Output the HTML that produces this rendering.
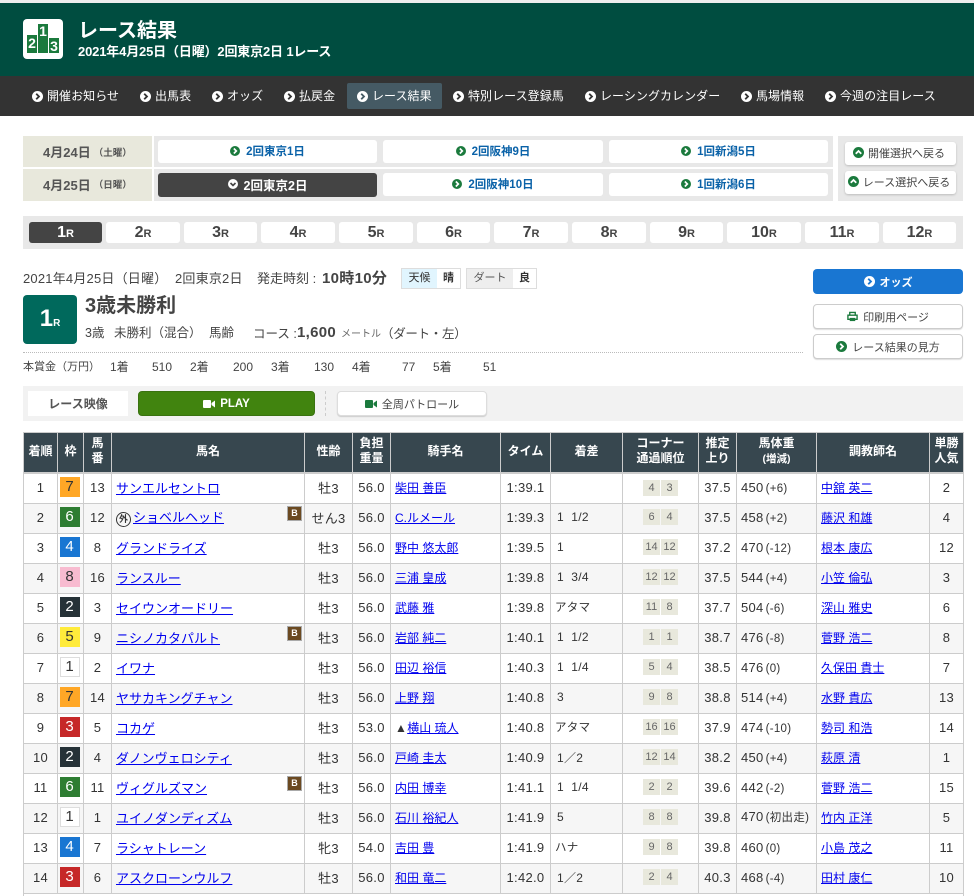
<!DOCTYPE html>
<html lang="ja"><head><meta charset="utf-8"><title>レース結果</title>
<style>
*{box-sizing:border-box}
html,body{margin:0;padding:0;width:974px;height:896px;overflow:hidden;background:#fff}
body{font-family:"Liberation Sans","Noto Sans CJK JP",sans-serif;color:#333;font-size:13px;position:relative}
.a{position:absolute;white-space:nowrap}
.c{display:flex;align-items:center;justify-content:center}
svg{display:block;flex:none}
i{font-style:normal}
.i{width:11px;height:11px;margin-right:5px}
.i2{width:10px;height:10px;margin-right:6px}
.nav{top:76px;height:40px;line-height:38px;font-size:12px;color:#fff;display:flex;align-items:center;letter-spacing:.05px}
.nav svg{margin-right:4px}
.db{background:#fff;border-radius:3px;height:23px;color:#0a62a8;font-weight:bold;font-size:11.5px;padding-bottom:2px}
.back{background:#fff;border-radius:3px;box-shadow:0 1px 2px #bbb;color:#444;font-size:11px;padding-bottom:2px}
.rb{top:222px;height:21px;background:#fff;border-radius:3px;font-size:16px;font-weight:bold;color:#444;text-align:center;line-height:21px}
.rb small{font-size:11px}
.btn{left:813px;width:150px;height:25px;background:#fff;border:1px solid #ccc;border-radius:4px;box-shadow:0 1px 1px #ddd;font-size:11px;color:#444}
.p{top:360px;font-size:12px;color:#444;line-height:15px}
.x{color:#444;line-height:16px}
table{position:absolute;left:23px;top:431.5px;width:940px;border-collapse:collapse;table-layout:fixed}
th{background:#37474f;color:#fff;font-size:12px;line-height:15px;font-weight:bold;border:1px solid #ccc;padding:0 0 2px;height:41px;text-align:center}
thead tr{border-bottom:2px solid #ccc}
td{border:1px solid #ccc;padding:0 0 2px;height:30px;text-align:center;font-size:13px;letter-spacing:.3px;color:#333;position:relative}
tbody tr:nth-child(even) td{background:#f6f6f6}
a{color:#00e;text-decoration:underline;letter-spacing:0}
td.n{text-align:left;padding-left:4px;font-size:13px}
td.j,td.t{text-align:left;padding-left:4px;font-size:12px}
td.m{text-align:left;padding-left:6px;font-size:12px}
td.m.k{padding-left:4px;font-size:11.5px}
td.w{text-align:left;padding-left:4px}
td.w span{font-size:11.5px;margin-left:2px}
.wk{display:block;position:relative;left:-1px;width:20px;height:20px;margin:0 auto;line-height:20px;font-size:15px;letter-spacing:0}
.w1{background:#fff;border:1px solid #ddd;line-height:18px;color:#333}.w2{background:#263238;color:#fff}.w3{background:#c62828;color:#fff}.w4{background:#1976d2;color:#fff}.w5{background:#ffeb3b}.w6{background:#2e7d32;color:#fff}.w7{background:#ffa726}.w8{background:#f8bbd0}
.b{position:absolute;right:2px;top:2px;width:15px;height:15px;background:#6b4a22;border:1px solid #aaa;color:#fff;font-size:9px;font-weight:bold;line-height:13px;text-align:center;letter-spacing:0}
.cn{display:inline-block;width:17px;height:16px;line-height:16px;background:#e8e8dc;font-size:11px;color:#666;letter-spacing:0;vertical-align:middle;margin:0 .5px}
.g{display:inline-block;width:15px;height:15px;border:1px solid #333;border-radius:50%;font-size:9px;line-height:13px;text-align:center;color:#333;margin-right:2px;vertical-align:0;font-weight:bold;letter-spacing:0}
</style></head><body>
<svg width="0" height="0" style="position:absolute"><defs>
<symbol id="r" viewBox="0 0 12 12"><circle cx="6" cy="6" r="6" fill="currentColor"/><path d="M4.6 3 7.6 6 4.6 9" fill="none" stroke="var(--k,#fff)" stroke-width="2"/></symbol>
<symbol id="d" viewBox="0 0 12 12"><circle cx="6" cy="6" r="6" fill="#fff"/><path d="M3 4.8 6 7.8 9 4.8" fill="none" stroke="#444" stroke-width="2"/></symbol>
<symbol id="u" viewBox="0 0 12 12"><circle cx="6" cy="6" r="6" fill="#1b7a3d"/><path d="M3 7.4 6 4.4 9 7.4" fill="none" stroke="#fff" stroke-width="2"/></symbol>
<symbol id="v" viewBox="0 0 12 10"><rect x="0" y="1" width="8" height="8" rx="1" fill="currentColor"/><path d="M8.5 4 12 1.5V8.5L8.5 6Z" fill="currentColor"/></symbol>
</defs></svg>

<div class="a" style="left:0;top:0;width:974px;height:3px;background:#eee"></div>
<div class="a" style="left:0;top:3px;width:974px;height:73px;background:#004d40"></div>
<div class="a" style="left:0;top:76px;width:974px;height:40px;background:#333"></div>

<div class="a" style="left:23px;top:19px;width:40px;height:40px;background:#fff;border-radius:4px"></div>
<div class="a" style="left:27px;top:35px;width:10px;height:18px;background:#1b7a3d;color:#fff;font:bold 14px/16px 'Liberation Sans';text-align:center">2</div>
<div class="a" style="left:38px;top:24px;width:10px;height:29px;background:#1b7a3d;color:#fff;font:bold 14px/15px 'Liberation Sans';text-align:center">1</div>
<div class="a" style="left:49px;top:38px;width:10px;height:15px;background:#1b7a3d;color:#fff;font:bold 14px/16px 'Liberation Sans';text-align:center">3</div>
<div class="a" style="left:78px;top:18px;font-size:20px;line-height:26px;font-weight:bold;color:#fff">レース結果</div>
<div class="a" style="left:78px;top:43px;font-size:13px;line-height:18px;font-weight:bold;color:#fff;letter-spacing:-.16px">2021年4月25日（日曜）2回東京2日 1レース</div>

<div class="a" style="left:347px;top:83px;width:95px;height:26px;background:#455a64;border-radius:2px"></div>
<div class="a nav" style="left:32px;--k:#333"><svg class="i" style="color:#fff"><use href="#r"/></svg>開催お知らせ</div>
<div class="a nav" style="left:140px;--k:#333"><svg class="i" style="color:#fff"><use href="#r"/></svg>出馬表</div>
<div class="a nav" style="left:212px;--k:#333"><svg class="i" style="color:#fff"><use href="#r"/></svg>オッズ</div>
<div class="a nav" style="left:284px;--k:#333"><svg class="i" style="color:#fff"><use href="#r"/></svg>払戻金</div>
<div class="a nav" style="left:357px;--k:#455a64"><svg class="i" style="color:#fff"><use href="#r"/></svg>レース結果</div>
<div class="a nav" style="left:453px;--k:#333"><svg class="i" style="color:#fff"><use href="#r"/></svg>特別レース登録馬</div>
<div class="a nav" style="left:585px;--k:#333"><svg class="i" style="color:#fff"><use href="#r"/></svg>レーシングカレンダー</div>
<div class="a nav" style="left:741px;--k:#333"><svg class="i" style="color:#fff"><use href="#r"/></svg>馬場情報</div>
<div class="a nav" style="left:825px;--k:#333"><svg class="i" style="color:#fff"><use href="#r"/></svg>今週の注目レース</div>

<div class="a" style="left:23px;top:136px;width:810px;height:65px;background:#e8e8e8"></div>
<div class="a" style="left:23px;top:167px;width:810px;height:2px;background:#fff"></div>
<div class="a c" style="left:23px;top:136px;width:129px;height:31px;background:#e8e8dc;font-size:13px;font-weight:bold;color:#555;justify-content:flex-start;padding-left:20px">4月24日<span style="font-size:9.5px;margin-left:3px">（土曜）</span></div>
<div class="a c" style="left:23px;top:169px;width:129px;height:32px;background:#e8e8dc;font-size:13px;font-weight:bold;color:#555;justify-content:flex-start;padding:0 0 2px 20px">4月25日<span style="font-size:9.5px;margin-left:3px">（日曜）</span></div>
<div class="a" style="left:152px;top:136px;width:2px;height:65px;background:#fff"></div>

<div class="a c db" style="left:158px;top:140px;width:219px"><svg class="i2" style="color:#1b7a3d"><use href="#r"/></svg>2回東京1日</div>
<div class="a c db" style="left:383px;top:140px;width:220px"><svg class="i2" style="color:#1b7a3d"><use href="#r"/></svg>2回阪神9日</div>
<div class="a c db" style="left:609px;top:140px;width:219px"><svg class="i2" style="color:#1b7a3d"><use href="#r"/></svg>1回新潟5日</div>
<div class="a c db" style="left:158px;top:173px;width:219px;height:24px;background:#444;color:#fff;font-size:12.5px"><svg class="i2"><use href="#d"/></svg>2回東京2日</div>
<div class="a c db" style="left:383px;top:173px;width:220px"><svg class="i2" style="color:#1b7a3d"><use href="#r"/></svg>2回阪神10日</div>
<div class="a c db" style="left:609px;top:173px;width:219px"><svg class="i2" style="color:#1b7a3d"><use href="#r"/></svg>1回新潟6日</div>

<div class="a" style="left:838px;top:136px;width:125px;height:65px;background:#e8e8e8"></div>
<div class="a c back" style="left:845px;top:142px;width:111px;height:23px"><svg class="i" style="margin:0 4px 0 -3px"><use href="#u"/></svg>開催選択へ戻る</div>
<div class="a c back" style="left:845px;top:171px;width:111px;height:23px"><svg class="i" style="margin:0 4px 0 -3px"><use href="#u"/></svg>レース選択へ戻る</div>

<div class="a" style="left:23px;top:216px;width:940px;height:33px;background:#e8e8e8"></div>
<div class="a rb" style="left:29px;width:73px;background:#444;color:#fff">1<small>R</small></div>
<div class="a rb" style="left:106px;width:74px">2<small>R</small></div>
<div class="a rb" style="left:184px;width:73px">3<small>R</small></div>
<div class="a rb" style="left:261px;width:74px">4<small>R</small></div>
<div class="a rb" style="left:339px;width:74px">5<small>R</small></div>
<div class="a rb" style="left:417px;width:73px">6<small>R</small></div>
<div class="a rb" style="left:494px;width:74px">7<small>R</small></div>
<div class="a rb" style="left:572px;width:74px">8<small>R</small></div>
<div class="a rb" style="left:650px;width:73px">9<small>R</small></div>
<div class="a rb" style="left:727px;width:74px">10<small>R</small></div>
<div class="a rb" style="left:805px;width:74px">11<small>R</small></div>
<div class="a rb" style="left:883px;width:73px">12<small>R</small></div>

<div class="a x" style="left:23px;top:271px;font-size:13px;letter-spacing:.2px">2021年4月25日（日曜）</div>
<div class="a x" style="left:175px;top:271px;font-size:13px;letter-spacing:.2px">2回東京2日</div>
<div class="a x" style="left:257px;top:271px;font-size:13px">発走時刻 :</div>
<div class="a x" style="left:322px;top:271px;font-size:15px;font-weight:bold;letter-spacing:.3px">10時10分</div>
<div class="a" style="left:401px;top:268px;width:60px;height:21px;border:1px solid #ddd;background:#fff;font-size:11px;line-height:19px"><span style="display:inline-block;width:35px;background:#e1f5fe;text-align:center">天候</span><b style="display:inline-block;width:23px;text-align:center">晴</b></div>
<div class="a" style="left:466px;top:268px;width:71px;height:21px;border:1px solid #ddd;background:#fff;font-size:11px;line-height:19px"><span style="display:inline-block;width:46px;background:#eee;text-align:center;color:#555">ダート</span><b style="display:inline-block;width:23px;text-align:center">良</b></div>

<div class="a" style="left:23px;top:295px;width:54px;height:49px;background:#00695c;border-radius:4px;color:#fff;text-align:center;font-weight:bold;font-size:24px;line-height:48px">1<span style="font-size:10px">R</span></div>
<div class="a" style="left:85px;top:293px;font-size:20px;line-height:26px;font-weight:bold;color:#444">3歳未勝利</div>
<div class="a x" style="left:85px;top:325px;font-size:12.5px">3歳</div>
<div class="a x" style="left:114px;top:325px;font-size:12.5px">未勝利（混合）</div>
<div class="a x" style="left:209px;top:325px;font-size:12.5px">馬齢</div>
<div class="a x" style="left:253px;top:326px;font-size:12.5px">コース :</div>
<div class="a x" style="left:297px;top:325px;font-size:15px;font-weight:bold;letter-spacing:.3px">1,600</div>
<div class="a x" style="left:341px;top:327px;font-size:10px;color:#666">メートル</div>
<div class="a x" style="left:381px;top:326px;font-size:12.5px;letter-spacing:-.3px">（ダート・左）</div>

<div class="a" style="left:23px;top:352px;width:780px;border-top:1px dotted #bbb"></div>
<div class="a p" style="left:23px;font-size:11px">本賞金（万円）</div>
<div class="a p" style="left:110px">1着</div><div class="a p" style="left:152px">510</div>
<div class="a p" style="left:190px">2着</div><div class="a p" style="left:233px">200</div>
<div class="a p" style="left:271px">3着</div><div class="a p" style="left:314px">130</div>
<div class="a p" style="left:352px">4着</div><div class="a p" style="left:402px">77</div>
<div class="a p" style="left:433px">5着</div><div class="a p" style="left:483px">51</div>

<div class="a" style="left:23px;top:386px;width:940px;height:35px;background:#f2f2f2"></div>
<div class="a c" style="left:28px;top:391px;width:100px;height:25px;background:#fff;font-size:12px;font-weight:bold;color:#555">レース映像</div>
<div class="a c" style="left:138px;top:391px;width:177px;height:25px;background:#41840f;border:1px solid #3a7210;border-radius:4px;color:#fff;font-size:11.5px;font-weight:bold"><svg width="12" height="10" style="margin-right:5px;color:#fff"><use href="#v"/></svg>PLAY</div>
<div class="a" style="left:325px;top:391px;height:25px;border-left:1px dashed #ccc"></div>
<div class="a c" style="left:337px;top:391px;width:150px;height:25px;background:#fff;border:1px solid #ddd;border-radius:4px;box-shadow:0 1px 1px #ccc;font-size:11px;color:#444"><svg width="12" height="10" style="margin-right:5px;color:#1b7a3d"><use href="#v"/></svg>全周パトロール</div>

<div class="a c" style="left:813px;top:269px;width:150px;height:25px;background:#1976d2;border-radius:4px;color:#fff;font-size:11px;font-weight:bold;--k:#1976d2"><svg class="i" style="color:#fff"><use href="#r"/></svg>オッズ</div>
<div class="a c btn" style="top:304px"><svg width="11" height="11" viewBox="0 0 12 12" style="margin-right:5px"><path d="M3 4V1.500H9V4M1 4.500H11V9H1Z" fill="none" stroke="#1b7a3d" stroke-width="1.500"/><path d="M3 7.500H9V11H3Z" fill="#1b7a3d"/></svg>印刷用ページ</div>
<div class="a c btn" style="top:334px;--k:#fff"><svg class="i" style="color:#1b7a3d"><use href="#r"/></svg>レース結果の見方</div>

<table>
<colgroup><col style="width:34px"><col style="width:26px"><col style="width:28px"><col style="width:193px"><col style="width:48px"><col style="width:38px"><col style="width:110px"><col style="width:50px"><col style="width:72px"><col style="width:76px"><col style="width:38px"><col style="width:80px"><col style="width:113px"><col style="width:34px"></colgroup>
<thead><tr><th>着順</th><th>枠</th><th>馬<br>番</th><th>馬名</th><th>性齢</th><th>負担<br>重量</th><th>騎手名</th><th>タイム</th><th>着差</th><th>コーナー<br>通過順位</th><th>推定<br>上り</th><th>馬体重<br><span style="font-size:10.5px">(増減)</span></th><th>調教師名</th><th>単勝<br>人気</th></tr></thead>
<tbody>
<tr><td>1</td><td><i class="wk w7">7</i></td><td>13</td><td class="n"><a href="#">サンエルセントロ</a></td><td>牡3</td><td>56.0</td><td class="j"><a href="#">柴田 善臣</a></td><td>1:39.1</td><td class="m"></td><td><i class="cn">4</i><i class="cn">3</i></td><td>37.5</td><td class="w">450<span>(+6)</span></td><td class="t"><a href="#">中舘 英二</a></td><td>2</td></tr>
<tr><td>2</td><td><i class="wk w6">6</i></td><td>12</td><td class="n"><span class="g">外</span><a href="#">ショベルヘッド</a><span class="b">B</span></td><td>せん3</td><td>56.0</td><td class="j"><a href="#">C.ルメール</a></td><td>1:39.3</td><td class="m">1&nbsp; 1/2</td><td><i class="cn">6</i><i class="cn">4</i></td><td>37.5</td><td class="w">458<span>(+2)</span></td><td class="t"><a href="#">藤沢 和雄</a></td><td>4</td></tr>
<tr><td>3</td><td><i class="wk w4">4</i></td><td>8</td><td class="n"><a href="#">グランドライズ</a></td><td>牡3</td><td>56.0</td><td class="j"><a href="#">野中 悠太郎</a></td><td>1:39.5</td><td class="m">1</td><td><i class="cn">14</i><i class="cn">12</i></td><td>37.2</td><td class="w">470<span>(-12)</span></td><td class="t"><a href="#">根本 康広</a></td><td>12</td></tr>
<tr><td>4</td><td><i class="wk w8">8</i></td><td>16</td><td class="n"><a href="#">ランスルー</a></td><td>牡3</td><td>56.0</td><td class="j"><a href="#">三浦 皇成</a></td><td>1:39.8</td><td class="m">1&nbsp; 3/4</td><td><i class="cn">12</i><i class="cn">12</i></td><td>37.5</td><td class="w">544<span>(+4)</span></td><td class="t"><a href="#">小笠 倫弘</a></td><td>3</td></tr>
<tr><td>5</td><td><i class="wk w2">2</i></td><td>3</td><td class="n"><a href="#">セイウンオードリー</a></td><td>牡3</td><td>56.0</td><td class="j"><a href="#">武藤 雅</a></td><td>1:39.8</td><td class="m k">アタマ</td><td><i class="cn">11</i><i class="cn">8</i></td><td>37.7</td><td class="w">504<span>(-6)</span></td><td class="t"><a href="#">深山 雅史</a></td><td>6</td></tr>
<tr><td>6</td><td><i class="wk w5">5</i></td><td>9</td><td class="n"><a href="#">ニシノカタパルト</a><span class="b">B</span></td><td>牡3</td><td>56.0</td><td class="j"><a href="#">岩部 純二</a></td><td>1:40.1</td><td class="m">1&nbsp; 1/2</td><td><i class="cn">1</i><i class="cn">1</i></td><td>38.7</td><td class="w">476<span>(-8)</span></td><td class="t"><a href="#">菅野 浩二</a></td><td>8</td></tr>
<tr><td>7</td><td><i class="wk w1">1</i></td><td>2</td><td class="n"><a href="#">イワナ</a></td><td>牡3</td><td>56.0</td><td class="j"><a href="#">田辺 裕信</a></td><td>1:40.3</td><td class="m">1&nbsp; 1/4</td><td><i class="cn">5</i><i class="cn">4</i></td><td>38.5</td><td class="w">476<span>(0)</span></td><td class="t"><a href="#">久保田 貴士</a></td><td>7</td></tr>
<tr><td>8</td><td><i class="wk w7">7</i></td><td>14</td><td class="n"><a href="#">ヤサカキングチャン</a></td><td>牡3</td><td>56.0</td><td class="j"><a href="#">上野 翔</a></td><td>1:40.8</td><td class="m">3</td><td><i class="cn">9</i><i class="cn">8</i></td><td>38.8</td><td class="w">514<span>(+4)</span></td><td class="t"><a href="#">水野 貴広</a></td><td>13</td></tr>
<tr><td>9</td><td><i class="wk w3">3</i></td><td>5</td><td class="n"><a href="#">コカゲ</a></td><td>牡3</td><td>53.0</td><td class="j">▲<a href="#">横山 琉人</a></td><td>1:40.8</td><td class="m k">アタマ</td><td><i class="cn">16</i><i class="cn">16</i></td><td>37.9</td><td class="w">474<span>(-10)</span></td><td class="t"><a href="#">勢司 和浩</a></td><td>14</td></tr>
<tr><td>10</td><td><i class="wk w2">2</i></td><td>4</td><td class="n"><a href="#">ダノンヴェロシティ</a></td><td>牡3</td><td>56.0</td><td class="j"><a href="#">戸崎 圭太</a></td><td>1:40.9</td><td class="m">1／2</td><td><i class="cn">12</i><i class="cn">14</i></td><td>38.2</td><td class="w">450<span>(+4)</span></td><td class="t"><a href="#">萩原 清</a></td><td>1</td></tr>
<tr><td>11</td><td><i class="wk w6">6</i></td><td>11</td><td class="n"><a href="#">ヴィグルズマン</a><span class="b">B</span></td><td>牡3</td><td>56.0</td><td class="j"><a href="#">内田 博幸</a></td><td>1:41.1</td><td class="m">1&nbsp; 1/4</td><td><i class="cn">2</i><i class="cn">2</i></td><td>39.6</td><td class="w">442<span>(-2)</span></td><td class="t"><a href="#">菅野 浩二</a></td><td>15</td></tr>
<tr><td>12</td><td><i class="wk w1">1</i></td><td>1</td><td class="n"><a href="#">ユイノダンディズム</a></td><td>牡3</td><td>56.0</td><td class="j"><a href="#">石川 裕紀人</a></td><td>1:41.9</td><td class="m">5</td><td><i class="cn">8</i><i class="cn">8</i></td><td>39.8</td><td class="w">470<span>(初出走)</span></td><td class="t"><a href="#">竹内 正洋</a></td><td>5</td></tr>
<tr><td>13</td><td><i class="wk w4">4</i></td><td>7</td><td class="n"><a href="#">ラシャトレーン</a></td><td>牝3</td><td>54.0</td><td class="j"><a href="#">吉田 豊</a></td><td>1:41.9</td><td class="m k">ハナ</td><td><i class="cn">9</i><i class="cn">8</i></td><td>39.8</td><td class="w">460<span>(0)</span></td><td class="t"><a href="#">小島 茂之</a></td><td>11</td></tr>
<tr><td>14</td><td><i class="wk w3">3</i></td><td>6</td><td class="n"><a href="#">アスクローンウルフ</a></td><td>牡3</td><td>56.0</td><td class="j"><a href="#">和田 竜二</a></td><td>1:42.0</td><td class="m">1／2</td><td><i class="cn">2</i><i class="cn">4</i></td><td>40.3</td><td class="w">468<span>(-4)</span></td><td class="t"><a href="#">田村 康仁</a></td><td>10</td></tr>
<tr><td colspan="14"></td></tr>
</tbody></table>
</body></html>
